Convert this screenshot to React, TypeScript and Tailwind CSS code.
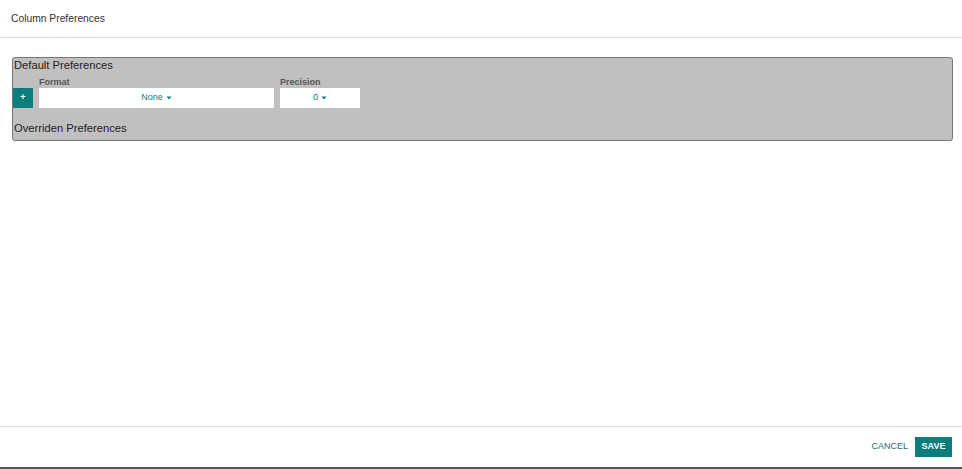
import React from "react";

const TEAL = "text-[#0b7d7d]";

function Caret() {
  return (
    <svg className="ml-[3px] inline-block" width="6" height="4" viewBox="0 0 6 4">
      <path d="M0.5 0.5h5L3 3.5z" fill="currentColor" />
    </svg>
  );
}

function Select({ value }: { value: string }) {
  return (
    <button className={`flex h-5 items-center justify-center bg-white text-[9px] ${TEAL}`}>
      {value}
      <Caret />
    </button>
  );
}

export default function App() {
  return (
    <div
      className="flex h-screen flex-col bg-white text-[#333]"
      style={{ fontFamily: '"Liberation Sans", Arial, sans-serif' }}
    >
      {/* header */}
      <div className="flex h-[38px] shrink-0 items-center border-b border-[#dcdcdc] pl-[11px] text-[10.3px]">
        Column Preferences
      </div>

      {/* body */}
      <div className="flex-1 pt-[19px] pl-3 pr-[9px]">
        <div className="rounded-[3px] border border-[#777] bg-[#c0c0c0] pt-[1px] pb-[5px]">
          <div className="h-[13px] pl-[1px] text-[11.2px] leading-[13px] text-[#222]">Default Preferences</div>
          <div className="mt-[4px] grid grid-cols-[20px_235px_80px] gap-x-[6px]">
            <div />
            <div className="h-3 text-[9px] font-bold leading-3 text-[#555]">Format</div>
            <div className="h-3 text-[9px] font-bold leading-3 text-[#555]">Precision</div>
            <button className="flex h-5 items-center justify-center bg-[#0b7d7d] text-[9px] font-bold text-white">
              +
            </button>
            <Select value="None" />
            <Select value="0" />
          </div>
          <div className="mt-[14px] h-[13px] pl-[1px] text-[11.2px] leading-[13px] text-[#222]">
            Overriden Preferences
          </div>
        </div>
      </div>

      {/* footer */}
      <div className="flex h-[43px] shrink-0 items-center justify-end gap-[7px] border-t border-b-2 border-t-[#dcdcdc] border-b-[#555] pr-[10px]">
        <button className="text-[9px] text-[#1d6f6f]">CANCEL</button>
        <button className="h-5 w-[37px] bg-[#0b7d7d] text-[9px] font-bold text-white">SAVE</button>
      </div>
    </div>
  );
}
